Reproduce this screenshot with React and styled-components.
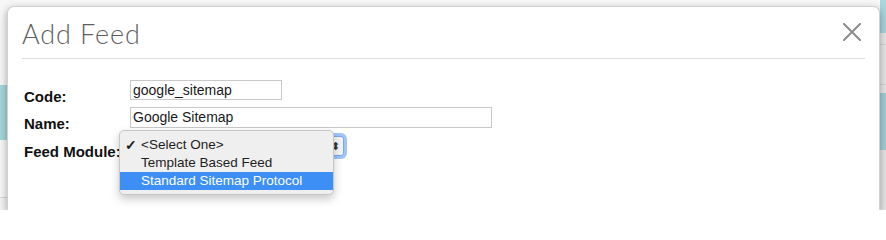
import React from "react";
import styled, { createGlobalStyle } from "styled-components";

const Global = createGlobalStyle`
  html, body { margin: 0; padding: 0; }
  body { width: 886px; height: 210px; overflow: hidden; font-family: "Liberation Sans", Arial, sans-serif; }
`;

const Page = styled.div`
  display: grid;
  grid-template-columns: 7px 1fr 6px;
  height: 210px;
  overflow: hidden;
  background: #f7f7f7;
`;

const Strip = styled.div`
  display: flex;
  flex-direction: column;
  background: ${(p) => p.$bg || "#f6f6f6"};
`;

const Band = styled.div`
  height: ${(p) => p.$h}px;
  flex: ${(p) => (p.$grow ? "1 0 auto" : "0 0 auto")};
  background: ${(p) => p.$bg || "transparent"};
  border-bottom: ${(p) => (p.$line ? "1px solid #d6d6d6" : "none")};
  box-sizing: border-box;
`;

const Modal = styled.div`
  position: relative;
  z-index: 2;
  margin-top: 6px;
  background: #fff;
  border: 1px solid rgba(0, 0, 0, 0.18);
  border-bottom: none;
  border-radius: 7px 7px 0 0;
  box-shadow: 0 3px 9px rgba(0, 0, 0, 0.35);
  display: flex;
  flex-direction: column;
  box-sizing: border-box;
`;

const Header = styled.div`
  margin: 0 14px;
  height: 52px;
  display: flex;
  align-items: center;
  justify-content: space-between;
  border-bottom: 1px solid #dcdcdc;
  box-sizing: border-box;
`;

const Title = styled.h4`
  margin: 0;
  padding-top: 2px;
  font-family: Lato, "Open Sans", sans-serif;
  font-weight: 300;
  font-size: 27px;
  color: #5f5f5f;
  letter-spacing: 0.9px;
`;

const Close = styled.button`
  border: 0;
  background: none;
  padding: 0;
  margin-right: 4px;
  margin-top: -1px;
  width: 18px;
  height: 18px;
  display: flex;
  cursor: pointer;
`;

const Body = styled.div`
  padding: 21px 0 0 16px;
  display: flex;
  flex-direction: column;
  gap: 7px;
`;

const Row = styled.div`
  position: relative;
  display: grid;
  grid-template-columns: 106px auto;
  align-items: start;
  height: ${(p) => p.$h || 20}px;
`;

const Label = styled.label`
  margin-top: 8px;
  font-weight: bold;
  font-size: 15px;
  line-height: 17px;
  color: #111;
`;

const Input = styled.div`
  width: ${(p) => p.$w}px;
  height: ${(p) => p.$h || 20}px;
  box-sizing: border-box;
  border: 1px solid #c9c9c9;
  padding: 0 2px;
  font-size: 14px;
  line-height: ${(p) => (p.$h || 20) - 2}px;
  color: #1a1a1a;
  background: #fff;
`;

const SelectBox = styled.div`
  margin-top: 1px;
  width: 214px;
  height: 20px;
  box-sizing: border-box;
  border: 1px solid #7aa7e8;
  border-radius: 3px;
  background: #f4f4f4;
  box-shadow: 0 0 0 3px rgba(80, 150, 245, 0.55);
  display: flex;
  justify-content: flex-end;
  align-items: center;
  padding-right: 3px;
  font-size: 11px;
  color: #333;
`;

const Menu = styled.ul`
  position: absolute;
  left: 95px;
  top: -5px;
  width: 215px;
  margin: 0;
  padding: 5px 0 4px;
  list-style: none;
  background: #efefef;
  border: 1px solid #c6c6c6;
  border-radius: 5px;
  box-shadow: 0 4px 10px rgba(0, 0, 0, 0.22);
  box-sizing: border-box;
  z-index: 5;
`;

const Item = styled.li`
  position: relative;
  height: 18px;
  padding-left: 21px;
  font-size: 13.5px;
  line-height: 18px;
  color: ${(p) => (p.$active ? "#fff" : "#1e1e1e")};
  background: ${(p) => (p.$active ? "#3d8ff5" : "transparent")};
  white-space: nowrap;
`;

const Check = styled.span`
  position: absolute;
  left: 5px;
  top: 0;
  font-size: 14px;
  font-weight: bold;
`;

export default function App() {
  return (
    <>
      <Global />
      <Page>
        <Strip>
          <Band $h={85} $bg="#f7f7f7" />
          <Band $h={55} $bg="#a7d6db" />
          <Band $h={58} $bg="#f8f8f8" $line />
          <Band $grow $bg="#f4f4f4" />
        </Strip>
        <Modal>
          <Header>
            <Title>Add Feed</Title>
            <Close aria-label="Close">
              <svg width="18" height="18" viewBox="0 0 18 18">
                <path d="M1 1 L17 17 M17 1 L1 17" stroke="#8c8c8c" strokeWidth="2" strokeLinecap="square" />
              </svg>
            </Close>
          </Header>
          <Body>
            <Row>
              <Label>Code:</Label>
              <Input $w={152}>google_sitemap</Input>
            </Row>
            <Row $h={21}>
              <Label>Name:</Label>
              <Input $w={362} $h={21}>Google Sitemap</Input>
            </Row>
            <Row>
              <Label>Feed Module:</Label>
              <SelectBox>⬍</SelectBox>
              <Menu>
                <Item>
                  <Check>✓</Check>&lt;Select One&gt;
                </Item>
                <Item>Template Based Feed</Item>
                <Item $active>Standard Sitemap Protocol</Item>
              </Menu>
            </Row>
          </Body>
        </Modal>
        <Strip $bg="#e6e6e6">
          <Band $h={33} $bg="#a7d6db" />
          <Band $h={12} $bg="#e8e8e8" $line />
          <Band $h={40} $bg="#e8e8e8" $line />
          <Band $h={8} $bg="#e8e8e8" />
          <Band $h={57} $bg="#a1d0d5" />
          <Band $grow $bg="#e6e6e6" />
        </Strip>
      </Page>
    </>
  );
}
